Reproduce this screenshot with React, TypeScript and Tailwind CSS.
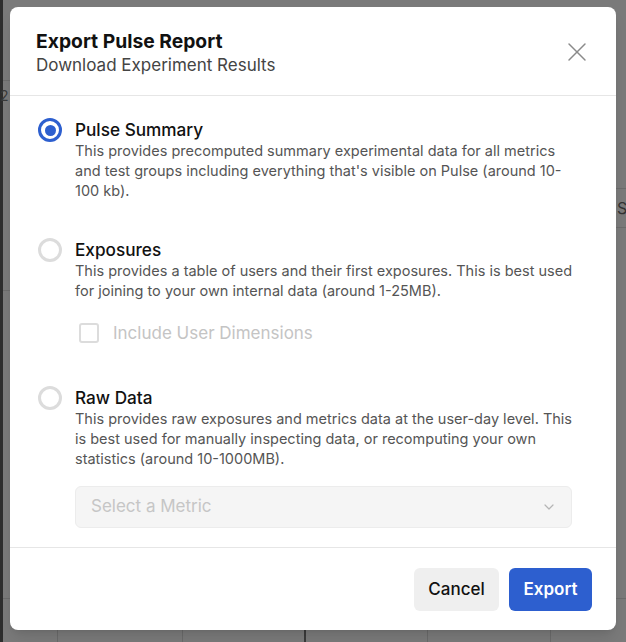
import React, { useState } from 'react';
import { X, ChevronDown } from 'lucide-react';

type Option = {
  id: string;
  title: string;
  desc: string;
};

const options: Option[] = [
  {
    id: 'summary',
    title: 'Pulse Summary',
    desc: "This provides precomputed summary experimental data for all metrics and test groups including everything that's visible on Pulse (around 10-100 kb).",
  },
  {
    id: 'exposures',
    title: 'Exposures',
    desc: 'This provides a table of users and their first exposures. This is best used for joining to your own internal data (around 1-25MB).',
  },
  {
    id: 'raw',
    title: 'Raw Data',
    desc: 'This provides raw exposures and metrics data at the user-day level. This is best used for manually inspecting data, or recomputing your own statistics (around 10-1000MB).',
  },
];

const Radio: React.FC<{ checked: boolean }> = ({ checked }) => (
  <span
    className={`flex h-6 w-6 shrink-0 items-center justify-center rounded-full border-[3px] ${
      checked ? 'border-[#2d5fcf]' : 'border-[#dcdcdc]'
    }`}
  >
    {checked && <span className="h-[11px] w-[11px] rounded-full bg-[#2d5fcf]" />}
  </span>
);

export default function App() {
  const [selected, setSelected] = useState('summary');

  return (
    <div className="relative h-[642px] w-[626px] overflow-hidden bg-[#7a7a7a] font-['Inter',sans-serif]">
      {/* dimmed page underneath */}
      <div className="absolute inset-y-0 left-0 w-[3px] bg-[#2e2e2e]" />
      <div className="absolute left-[3px] top-[80px] h-px w-[8px] bg-[#6c6c6c]" />
      <div className="absolute left-[3px] top-[290px] h-px w-[8px] bg-[#6c6c6c]" />
      <div className="absolute left-[3px] top-[598px] h-px w-[8px] bg-[#6c6c6c]" />
      <div className="absolute left-[616px] top-[188px] h-px w-[10px] bg-[#6c6c6c]" />
      <div className="absolute left-[616px] top-[227px] h-px w-[10px] bg-[#6c6c6c]" />
      <div className="absolute left-[617px] top-[198px] text-[16px] leading-5 text-[#333]">S</div>
      <div className="absolute left-[616px] top-[598px] h-px w-[10px] bg-[#6c6c6c]" />
      <div className="absolute left-[0px] top-[86px] text-[14px] leading-5 text-[#3a3a3a]">2</div>
      <div className="absolute left-[57px] top-[630px] h-3 w-px bg-[#6a6a6a]" />
      <div className="absolute left-[182px] top-[630px] h-3 w-px bg-[#6a6a6a]" />
      <div className="absolute left-[304px] top-[630px] h-3 w-[2px] bg-[#3a3a3a]" />
      <div className="absolute left-[427px] top-[630px] h-3 w-px bg-[#6a6a6a]" />
      <div className="absolute left-[550px] top-[630px] h-3 w-px bg-[#6a6a6a]" />

      {/* modal */}
      <div className="relative flex h-full w-full px-[10px] pb-[12px] pt-[7px]">
        <div className="flex w-full flex-col rounded-lg bg-white shadow-lg">
          <div className="flex items-start justify-between border-b border-[#e6e6e6] pb-[18px] pl-[26px] pr-[23px] pt-[22px]">
            <div>
              <h2 className="text-[19.3px] font-bold leading-6 text-[#111]">Export Pulse Report</h2>
              <p className="text-[17px] leading-6 text-[#444]">Download Experiment Results</p>
            </div>
            <button className="mt-[7px] text-[#8a8a8a]">
              <X className="h-8 w-8" strokeWidth={1.1} />
            </button>
          </div>

          <div className="flex flex-1 flex-col pl-[28px] pr-[36px] pt-[22px]">
            {options.map((opt, idx) => (
              <div key={opt.id} className={idx === 0 ? '' : idx === 1 ? 'mt-[37px]' : 'mt-[43px]'}>
                <label className="flex cursor-pointer gap-[13px]" onClick={() => setSelected(opt.id)}>
                  <Radio checked={selected === opt.id} />
                  <div className="pt-[1px]">
                    <div className="text-[17.2px] font-medium leading-[22px] text-[#111]">{opt.title}</div>
                    <p className="text-[14.5px] leading-5 text-[#555]">{opt.desc}</p>
                  </div>
                </label>

                {opt.id === 'exposures' && (
                  <div className="ml-[41px] mt-[22px] flex items-center gap-[14px]">
                    <span className="h-5 w-5 rounded-[3px] border-2 border-[#dcdcdc]" />
                    <span className="text-[17px] leading-5 text-[#c4c4c4]">Include User Dimensions</span>
                  </div>
                )}

                {opt.id === 'raw' && (
                  <div className="ml-[37px] mr-[8px] mt-[17px] flex h-[42px] items-center justify-between rounded-md border border-[#ececec] bg-[#f5f5f5] pl-[15px] pr-[14px]">
                    <span className="text-[17px] text-[#c6c6c6]">Select a Metric</span>
                    <ChevronDown className="h-4 w-4 text-[#b5b5b5]" strokeWidth={1.8} />
                  </div>
                )}
              </div>
            ))}
          </div>

          <div className="flex justify-end gap-[10px] border-t border-[#e6e6e6] pb-[19px] pr-[24px] pt-[20px]">
            <button className="h-[43px] w-[85px] rounded-md bg-[#efefef] text-[17px] font-medium text-[#111]">
              Cancel
            </button>
            <button className="h-[43px] w-[83px] rounded-md bg-[#2d5fcf] text-[17px] font-semibold text-white">
              Export
            </button>
          </div>
        </div>
      </div>
    </div>
  );
}
